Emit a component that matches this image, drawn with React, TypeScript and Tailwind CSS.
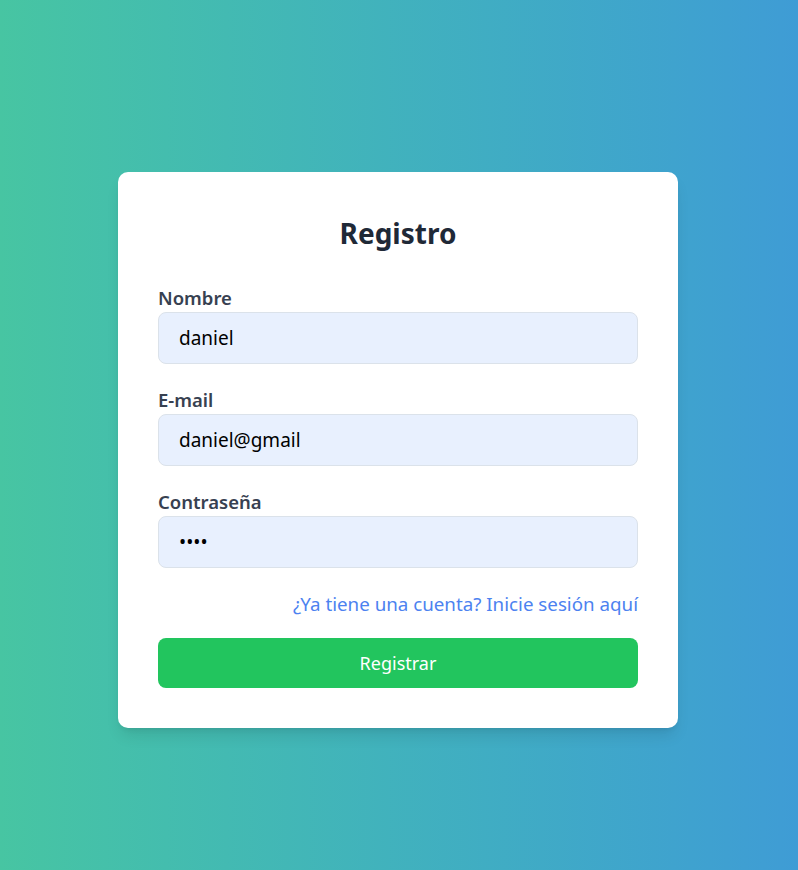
import { useState } from 'react'

export default function App() {
  const [nombre, setNombre] = useState('daniel')
  const [email, setEmail] = useState('daniel@gmail')
  const [password, setPassword] = useState('1234')

  const inputClass =
    'block h-[52px] w-full rounded-lg border border-[#dbe2ea] bg-[#e8f0fe] px-5 text-[19px] text-black outline-none'

  return (
    <div
      className="min-h-screen w-full bg-gradient-to-r from-[#47c5a2] to-[#3f9cd5] pt-[172px]"
      style={{ fontFamily: '"Noto Sans", "Open Sans", sans-serif' }}
    >
      <div className="ml-[118px] w-[560px] rounded-[10px] bg-white p-10 shadow-lg">
        <h1 className="mb-[30px] text-center text-[28px] font-bold leading-[42px] text-[#1f2937]">Registro</h1>

        <form onSubmit={(e) => e.preventDefault()}>
          <div className="mb-[22px]">
            <label htmlFor="nombre" className="block text-[18.5px] font-semibold leading-[28px] text-[#374151]">
              Nombre
            </label>
            <input id="nombre" className={inputClass} value={nombre} onChange={(e) => setNombre(e.target.value)} />
          </div>

          <div className="mb-[22px]">
            <label htmlFor="email" className="block text-[18.5px] font-semibold leading-[28px] text-[#374151]">
              E-mail
            </label>
            <input id="email" className={inputClass} value={email} onChange={(e) => setEmail(e.target.value)} />
          </div>

          <div className="mb-[22px]">
            <label htmlFor="password" className="block text-[18.5px] font-semibold leading-[28px] text-[#374151]">
              Contraseña
            </label>
            <input
              id="password"
              type="password"
              className={inputClass}
              value={password}
              onChange={(e) => setPassword(e.target.value)}
            />
          </div>

          <div className="mb-[20px] text-right">
            <a href="#" className="text-[18.75px] leading-[28px] text-[#4c82f0]">
              ¿Ya tiene una cuenta? Inicie sesión aquí
            </a>
          </div>

          <button type="submit" className="h-[50px] w-full rounded-lg bg-[#22c55e] text-[18px] text-white">
            Registrar
          </button>
        </form>
      </div>
    </div>
  )
}
